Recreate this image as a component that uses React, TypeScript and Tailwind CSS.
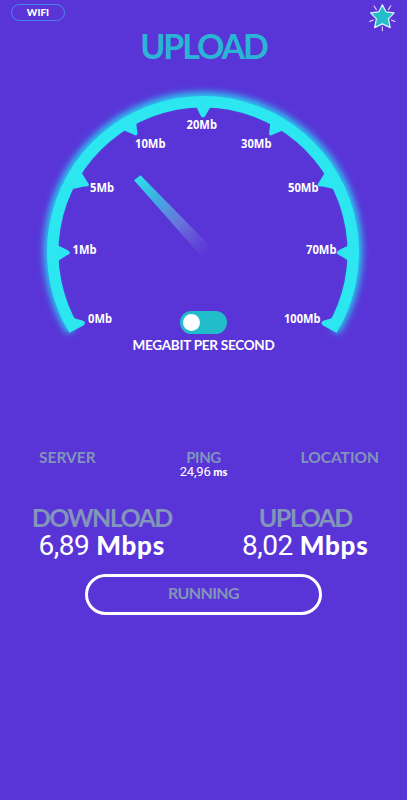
const ticks = [
  "57,245 66.5,249.5 Q73.5,253 66.5,255.5 L58,261",
  "80.5,171 83,175 L89,184.5 Q88.5,187 84,186.5 L73,189",
  "136,121.5 137.5,133 Q137.5,137 133.5,134.5 L123,130",
  "196,106 200.5,115.5 Q203,119.5 205.5,115.5 L211,106",
  "270.5,121.5 269,133 Q269,137 273,134.5 L284,130",
  "326,171 323.5,175 L317.5,184.5 Q318,187 322.5,186.5 L334,189",
  "349.5,245 340,249.5 Q333,253 340,255.5 L349,261",
  "69.3,332.7 83.5,325.5 Q87,322.5 82.5,320.5 L75,318.5 L70,314",
  "336.7,332.7 323,325.5 Q319.5,322.5 324,320.5 L331,318.5 L336,314",
];

const labels = [
  { text: "0Mb", x: 88, y: 323.3, w: 24 },
  { text: "1Mb", x: 72.5, y: 254.3, w: 24 },
  { text: "5Mb", x: 90, y: 191.8, w: 24 },
  { text: "10Mb", x: 135, y: 147.8, w: 30.5 },
  { text: "20Mb", x: 186.5, y: 129.3, w: 30.5 },
  { text: "30Mb", x: 241, y: 147.8, w: 30.5 },
  { text: "50Mb", x: 288, y: 191.8, w: 30.5 },
  { text: "70Mb", x: 306, y: 254.3, w: 30.5 },
  { text: "100Mb", x: 284, y: 323.3, w: 36.5 },
];

function StarIcon() {
  return (
    <svg viewBox="367 2 30 30" className="h-[30px] w-[30px]">
      <path
        d="M374 6l2.4 3.6M390.8 5.8l-2.5 3.8M369.7 21.6l3.6-1.5M391.4 20.1l3.6 1.5M382.3 26.8v4"
        stroke="#e3d5fb"
        strokeWidth="1.1"
        strokeLinecap="round"
      />
      <path
        d="M382.4 4.8l3.6 7 8.2 1.1-5.8 6 1.8 8.7-7.8-3.7-7.8 3.7 1.8-8.7-5.8-6 8.2-1.1z"
        fill="#22bfc9"
        stroke="#e6f2ff"
        strokeWidth="1.2"
        strokeLinejoin="round"
      />
    </svg>
  );
}

function Gauge() {
  return (
    <div className="relative h-[285px] w-full">
      <svg viewBox="0 70 407 285" className="h-[285px] w-[407px]">
        <defs>
          <filter id="glow" x="-20%" y="-20%" width="140%" height="140%">
            <feGaussianBlur stdDeviation="3.5" />
          </filter>
          <linearGradient id="needle" gradientUnits="userSpaceOnUse" x1="137" y1="178" x2="208" y2="253">
            <stop offset="0" stopColor="#2fdfec" />
            <stop offset="0.25" stopColor="#36c4e4" stopOpacity="0.88" />
            <stop offset="0.6" stopColor="#729fdd" stopOpacity="0.6" />
            <stop offset="1" stopColor="#8a80dc" stopOpacity="0" />
          </linearGradient>
        </defs>
        <path
          d="M71 331.5A154.5 154.5 0 1 1 335 331.5"
          fill="none"
          stroke="#28d3f2"
          strokeWidth="9"
          filter="url(#glow)"
        />
        <path d="M74.3 329.8A150.3 150.3 0 1 1 331.7 329.8" fill="none" stroke="#2ce7f0" strokeWidth="11.5" />
        {ticks.map((d) => (
          <path key={d} d={`M${d}Z`} fill="#2ce7f0" />
        ))}
        <path d="M134 180.3L140.5 175.3L211 247L201 256Z" fill="url(#needle)" />
        <g fill="#fff" fontFamily="'Noto Sans', sans-serif" fontSize="11.5" fontWeight="700">
          {labels.map((l) => (
            <text key={l.text} x={l.x} y={l.y} textLength={l.w} lengthAdjust="spacingAndGlyphs">
              {l.text}
            </text>
          ))}
        </g>
      </svg>
      {/* unit switch sits over the open end of the dial */}
      <div className="absolute inset-x-0 bottom-0 flex h-[44px] flex-col items-center">
        <div className="flex h-[23px] w-[47px] items-center rounded-full bg-[#22bdcb] pl-[3px]">
          <div className="h-[17px] w-[17px] rounded-full bg-white" />
        </div>
        <p className="mt-[3px] whitespace-nowrap text-[13.5px] leading-[16px] font-bold tracking-[-0.25px] text-white">
          MEGABIT PER SECOND
        </p>
      </div>
    </div>
  );
}

function Result({ title, value }: { title: string; value: string }) {
  return (
    <div className="flex w-[204px] flex-col items-center whitespace-nowrap">
      <h2 className="text-[25px] leading-[26px] font-bold tracking-[-1.6px] text-[#8295ba]">{title}</h2>
      <p className="flex items-baseline gap-[7px] leading-[30px] text-white">
        <span className="font-['Roboto'] text-[28px] tracking-[-0.5px]">{value}</span>
        <span className="text-[26px] font-black tracking-[0.7px]">Mbps</span>
      </p>
    </div>
  );
}

export default function App() {
  return (
    <main className="flex h-[800px] w-[407px] flex-col overflow-hidden bg-[#5935d7] font-['Lato',sans-serif]">
      <header className="flex h-[33px] items-start justify-between pt-[2px] pr-[10px] pl-[11px]">
        <div className="mt-[2px] flex h-[17px] w-[54px] items-center justify-center rounded-full border-[1.5px] border-[#4c86ed] pb-[2px] text-[10px] leading-none font-black text-white">
          WIFI
        </div>
        <StarIcon />
      </header>
      <h1 className="h-[37px] text-center text-[34px] leading-[26px] font-bold tracking-[-2.1px] text-[#2bb5d5]">
        UPLOAD
      </h1>
      <Gauge />

      <section className="mt-[93px] grid h-[56px] grid-cols-[1fr_60px_1fr] px-[28px] text-[15.5px] leading-[18px] font-bold text-[#8295ba]">
        <p className="pl-[11px]">SERVER</p>
        <div className="flex flex-col items-center whitespace-nowrap">
          <p className="text-[15px] tracking-[-0.4px]">PING</p>
          <p className="text-[11px] leading-[11px] font-black text-white">
            <span className="font-['Roboto'] text-[13px] font-normal tracking-[-0.2px]">24,96</span> ms
          </p>
        </div>
        <p className="text-right">LOCATION</p>
      </section>

      <section className="flex h-[70px]">
        <Result title="DOWNLOAD" value="6,89" />
        <Result title="UPLOAD" value="8,02" />
      </section>

      <button className="ml-[85px] flex h-[41px] w-[237px] items-center justify-center rounded-full border-[3.5px] border-white pb-[4px] text-[16px] leading-none font-bold tracking-[-0.6px] text-[#8295ba]">
        RUNNING
      </button>
    </main>
  );
}
